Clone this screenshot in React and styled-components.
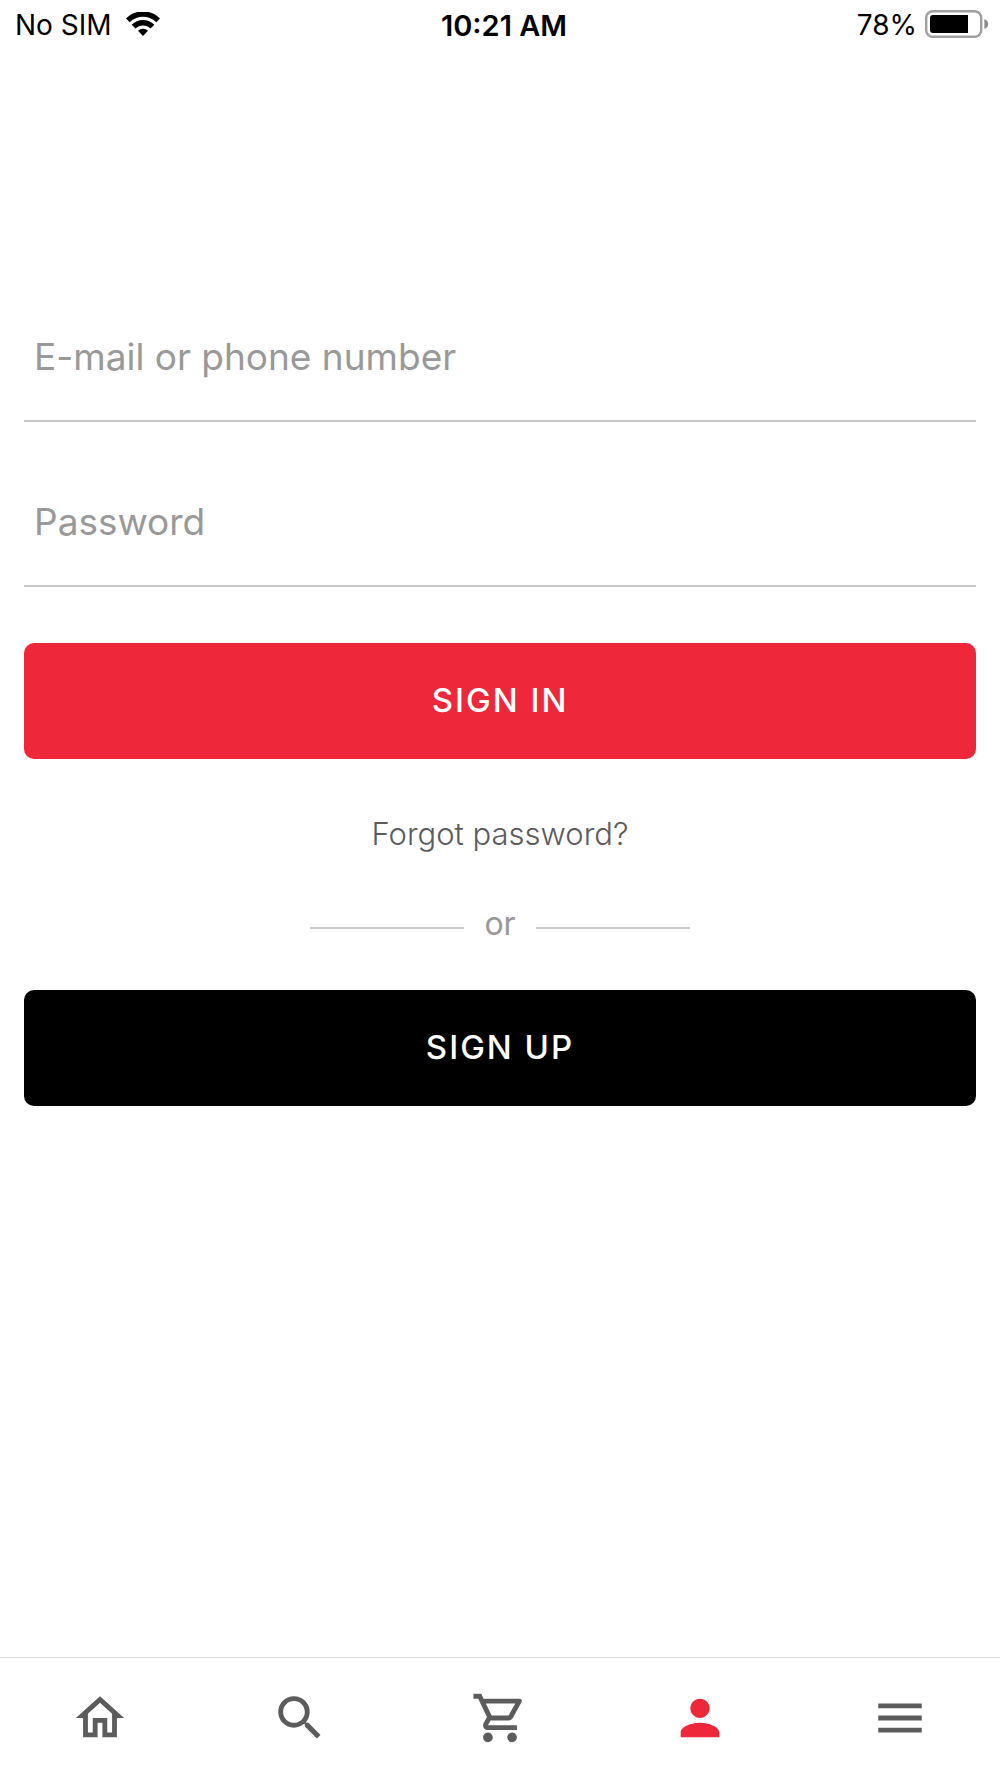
import React from "react";
import styled, { createGlobalStyle } from "styled-components";
import {
  MdMenu,
  MdOutlineHome,
  MdOutlineShoppingCart,
  MdPerson,
  MdSearch,
} from "react-icons/md";

const tabs = [
  { name: "Home", icon: MdOutlineHome },
  { name: "Search", icon: MdSearch },
  { name: "Cart", icon: MdOutlineShoppingCart },
  { name: "Account", icon: MdPerson },
  { name: "Menu", icon: MdMenu },
];

const App = () => {
  const [active, setActive] = React.useState("Account");

  return (
    <Screen>
      <GlobalStyle />
      <StatusBar>
        <StatusSide>
          No SIM
          <WifiIcon />
        </StatusSide>
        <Time>10:21 AM</Time>
        <StatusSide $end>
          78%
          <BatteryIcon />
        </StatusSide>
      </StatusBar>

      <Main>
        <Form onSubmit={(e) => e.preventDefault()}>
          <Input
            type="text"
            placeholder="E-mail or phone number"
            aria-label="E-mail or phone number"
          />
          <Input
            type="password"
            placeholder="Password"
            aria-label="Password"
          />
          <Button type="submit" $bg="#ee283a">
            SIGN IN
          </Button>
        </Form>
        <Forgot href="#forgot">Forgot password?</Forgot>
        <Divider>
          <Line />
          or
          <Line />
        </Divider>
        <Button type="button" $bg="#000">
          SIGN UP
        </Button>
      </Main>

      <TabBar>
        {tabs.map(({ name, icon: Icon }) => (
          <Tab
            key={name}
            type="button"
            aria-label={name}
            $active={active === name}
            onClick={() => setActive(name)}
          >
            <Icon />
          </Tab>
        ))}
      </TabBar>
    </Screen>
  );
};

const WifiIcon = () => (
  <svg width="34" height="24" viewBox="0 0 34 24" aria-hidden="true">
    <g fill="none" stroke="#000" strokeWidth="5.4">
      <path d="M1.8 8.4a21.5 21.5 0 0 1 30.4 0" />
      <path d="M7.6 14.6a13.3 13.3 0 0 1 18.8 0" />
    </g>
    <path d="M17 24l-5-5.2a7.2 7.2 0 0 1 10 0z" />
  </svg>
);

const BatteryIcon = () => (
  <svg width="64" height="28" viewBox="0 0 64 28" aria-hidden="true">
    <rect
      x="1.2"
      y="1.2"
      width="55"
      height="25.6"
      rx="6.5"
      fill="none"
      stroke="#a0a0a0"
      strokeWidth="2.4"
    />
    <path d="M8 5h35v18H8a3 3 0 0 1-3-3V8a3 3 0 0 1 3-3z" />
    <path d="M59.4 9q3.8 1.6 3.8 5t-3.8 5z" fill="#8c8c8c" />
  </svg>
);

export default App;

const GlobalStyle = createGlobalStyle`
  * {
    box-sizing: border-box;
  }

  body {
    margin: 0;
    background-color: #fff;
    font-family: Inter, "Liberation Sans", sans-serif;
  }
`;

const Screen = styled.div`
  min-height: 100vh;
  display: flex;
  flex-direction: column;
`;

const StatusBar = styled.header`
  display: grid;
  grid-template-columns: 1fr auto 1fr;
  align-items: center;
  height: 50px;
  padding: 0 11px 0 15px;
  color: #000;
  font-size: 28px;
`;

const StatusSide = styled.div`
  display: flex;
  align-items: center;
  justify-content: ${(props) => (props.$end ? "flex-end" : "flex-start")};
  gap: ${(props) => (props.$end ? "8px" : "14px")};

  svg {
    margin-bottom: 2px;
  }
`;

const Time = styled.div`
  padding-left: 4px;
  font-size: 29px;
  font-weight: 600;
`;

const Main = styled.main`
  flex: 1;
  display: flex;
  flex-direction: column;
  padding: 244px 24px 40px;
`;

const Form = styled.form`
  display: flex;
  flex-direction: column;
`;

const Input = styled.input`
  width: 100%;
  height: 128px;
  padding: 0 10px 2px;
  border: none;
  border-bottom: 2px solid #c8c8c8;
  border-radius: 0;
  outline: none;
  background-color: transparent;
  color: #333;
  font-family: inherit;
  font-size: 37px;

  &::placeholder {
    color: #999;
    opacity: 1;
  }

  & + & {
    margin-top: 37px;
  }
`;

const Button = styled.button`
  width: 100%;
  height: 116px;
  padding: 0 0 2px;
  border: none;
  border-radius: 10px;
  background-color: ${(props) => props.$bg};
  color: #fff;
  font-family: inherit;
  font-size: 33px;
  font-weight: 500;
  letter-spacing: 2px;
  cursor: pointer;

  ${Form} & {
    margin-top: 56px;
  }
`;

const Forgot = styled.a`
  align-self: center;
  margin-top: 57px;
  color: #5c5c5c;
  font-size: 31px;
  font-weight: 300;
  line-height: 36px;
  text-decoration: none;
`;

const Divider = styled.div`
  display: flex;
  align-items: center;
  justify-content: center;
  gap: 20px;
  margin: 54px 0 48px;
  color: #999;
  font-size: 32px;
  line-height: 36px;
`;

const Line = styled.span`
  width: 154px;
  height: 2px;
  margin-top: 8px;
  background-color: #c8c8c8;
`;

const TabBar = styled.nav`
  display: flex;
  border-top: 1px solid #e0e0e0;
`;

const Tab = styled.button`
  flex: 1;
  display: flex;
  align-items: center;
  justify-content: center;
  height: 120px;
  padding: 0 0 1px;
  border: none;
  background: none;
  color: ${(props) => (props.$active ? "#ee283a" : "#5c5c5c")};
  font-size: 58px;
  cursor: pointer;
`;
